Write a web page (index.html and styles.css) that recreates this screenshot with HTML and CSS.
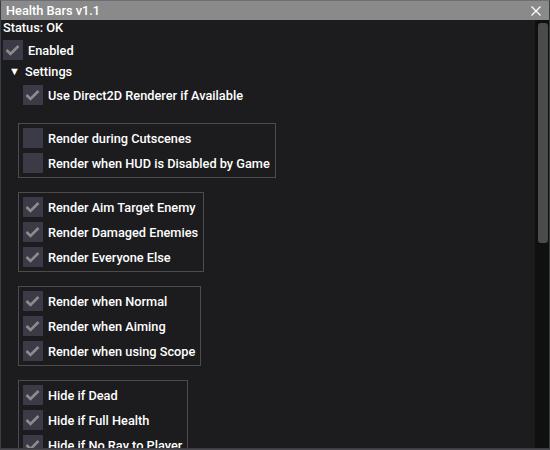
FILE: index.html
```html
<!DOCTYPE html>
<html lang="en">
<head>
  <meta charset="UTF-8" />
  <title>Health Bars v1.1</title>
  <link rel="stylesheet" href="styles.css">
</head>
<body>
  <div class="window">
    <div class="titlebar">
      <span class="title">Health Bars v1.1</span>
      <svg class="close" width="10" height="10" viewBox="0 0 10 10">
        <path d="M0.5 0.5 L9.5 9.5 M9.5 0.5 L0.5 9.5" />
      </svg>
    </div>

    <div class="frame">
      <div class="content">
        <div class="status">Status: OK</div>

        <div class="row enabled">
          <span class="box on"><svg viewBox="0 0 20 20"><path d="M3.5 10 L7.5 14 L15.5 6" /></svg></span>
          <span>Enabled</span>
        </div>

        <div class="tree"><span class="arrow">&#9660;</span>Settings</div>

        <div class="indent">
          <div class="row">
            <span class="box on"><svg viewBox="0 0 20 20"><path d="M3.5 10 L7.5 14 L15.5 6" /></svg></span>
            <span>Use Direct2D Renderer if Available</span>
          </div>

          <div class="group first">
            <div class="row"><span class="box"></span><span>Render during Cutscenes</span></div>
            <div class="row"><span class="box"></span><span>Render when HUD is Disabled by Game</span></div>
          </div>

          <div class="group">
            <div class="row">
              <span class="box on"><svg viewBox="0 0 20 20"><path d="M3.5 10 L7.5 14 L15.5 6" /></svg></span>
              <span>Render Aim Target Enemy</span>
            </div>
            <div class="row">
              <span class="box on"><svg viewBox="0 0 20 20"><path d="M3.5 10 L7.5 14 L15.5 6" /></svg></span>
              <span>Render Damaged Enemies</span>
            </div>
            <div class="row">
              <span class="box on"><svg viewBox="0 0 20 20"><path d="M3.5 10 L7.5 14 L15.5 6" /></svg></span>
              <span>Render Everyone Else</span>
            </div>
          </div>

          <div class="group">
            <div class="row">
              <span class="box on"><svg viewBox="0 0 20 20"><path d="M3.5 10 L7.5 14 L15.5 6" /></svg></span>
              <span>Render when Normal</span>
            </div>
            <div class="row">
              <span class="box on"><svg viewBox="0 0 20 20"><path d="M3.5 10 L7.5 14 L15.5 6" /></svg></span>
              <span>Render when Aiming</span>
            </div>
            <div class="row">
              <span class="box on"><svg viewBox="0 0 20 20"><path d="M3.5 10 L7.5 14 L15.5 6" /></svg></span>
              <span>Render when using Scope</span>
            </div>
          </div>

          <div class="group">
            <div class="row">
              <span class="box on"><svg viewBox="0 0 20 20"><path d="M3.5 10 L7.5 14 L15.5 6" /></svg></span>
              <span>Hide if Dead</span>
            </div>
            <div class="row">
              <span class="box on"><svg viewBox="0 0 20 20"><path d="M3.5 10 L7.5 14 L15.5 6" /></svg></span>
              <span>Hide if Full Health</span>
            </div>
            <div class="row">
              <span class="box on"><svg viewBox="0 0 20 20"><path d="M3.5 10 L7.5 14 L15.5 6" /></svg></span>
              <span>Hide if No Ray to Player</span>
            </div>
          </div>
        </div>
      </div>

      <div class="scrollbar"><div class="thumb"></div></div>
    </div>
  </div>
</body>
</html>
```

FILE: styles.css
```css
body {
  margin: 0;
  background: #46464c;
  font-family: 'Roboto', 'Liberation Sans', sans-serif;
  font-size: 12.75px;
  font-weight: 500;
  color: #fff;
}
.window {
  width: 548px;
  height: 447px;
  border: 1px solid #3c3c44;
  border-top-color: #6e6e76;
  background: #1c1c1e;
  display: flex;
  flex-direction: column;
  overflow: hidden;
}
.titlebar {
  height: 19px;
  flex: none;
  background: #8a8a8a;
  display: flex;
  align-items: center;
  justify-content: space-between;
  padding: 0 8px 0 5px;
}
.title {
  line-height: 19px;
}
.close {
  stroke: #fff;
  stroke-width: 1.2;
}
.frame {
  flex: 1;
  display: flex;
  min-height: 0;
}
.content {
  flex: 1;
  overflow: hidden;
  padding-left: 2px;
}
.status {
  height: 16px;
  line-height: 16px;
}
.row {
  display: flex;
  align-items: center;
  gap: 5px;
  height: 20px;
  white-space: nowrap;
}
.row + .row {
  margin-top: 5px;
}
.enabled {
  margin-top: 4px;
}
.box {
  width: 20px;
  height: 20px;
  background: #3b3b47;
  flex: none;
}
.box svg {
  display: block;
  width: 20px;
  height: 20px;
  fill: none;
  stroke: #8c8c8c;
  stroke-width: 2.6;
}
.tree {
  height: 20px;
  line-height: 20px;
  margin-top: 2px;
  display: flex;
  align-items: center;
}
.arrow {
  font-size: 11px;
  width: 16px;
  padding-left: 6px;
}
.indent {
  padding-left: 20px;
  padding-top: 3px;
}
.group {
  width: fit-content;
  margin-left: -5px;
  margin-top: 14px;
  border: 1px solid #4c4c4c;
  padding: 4px 5px 4px 4px;
}
.group.first {
  margin-top: 18px;
}
.scrollbar {
  width: 14px;
  flex: none;
  background: #101010;
  padding: 3px 1px 0 3px;
  box-sizing: border-box;
}
.thumb {
  height: 220px;
  background: #4b4b4b;
  border-radius: 3px;
}
```
